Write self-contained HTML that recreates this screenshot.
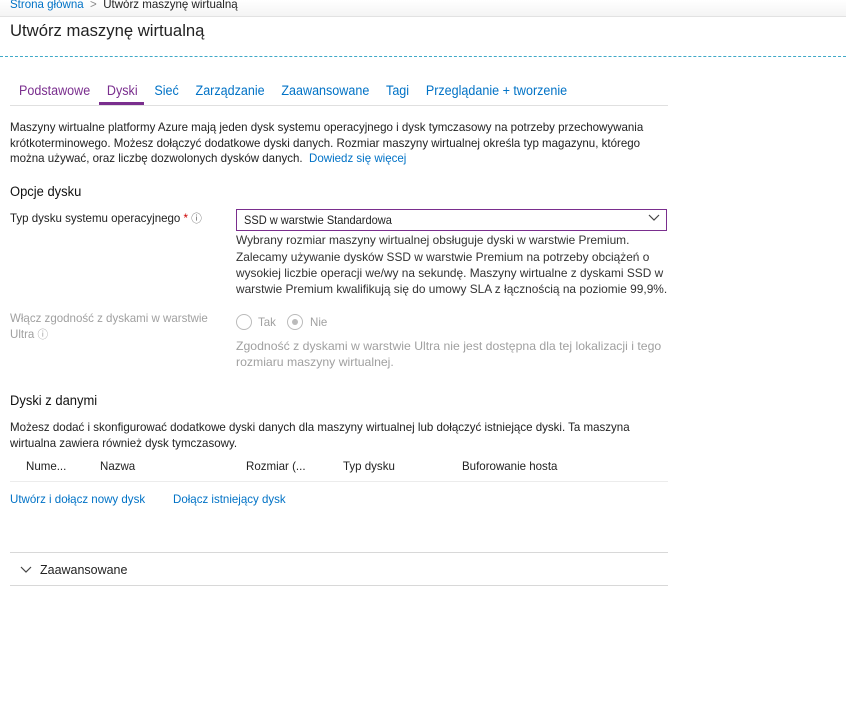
<!DOCTYPE html>
<html><head><meta charset="utf-8">
<style>
body{margin:0;width:846px;height:703px;background:#fff;position:relative;overflow:hidden;font-family:"Liberation Sans",sans-serif;color:#222;}
.t{position:absolute;white-space:nowrap;transform-origin:0 0;transform:scaleX(.96);font-size:12px;line-height:16px;}
.b{color:#0072c6}
.g{color:#a0a0a0}
.hl{position:absolute;height:1px;background:#e0e0e0}
</style></head><body>
<div style="position:absolute;left:0;top:0;width:846px;height:16px;background:linear-gradient(#fff,#f4f4f4);border-bottom:1px solid #e2e2e2"></div>
<div class="t" style="left:10px;top:-4px"><span class="b">Strona główna</span> <span style="color:#888">&nbsp;&gt;&nbsp;</span> Utwórz maszynę wirtualną</div>
<div class="t" style="left:10px;top:20px;font-size:17px;line-height:22px;transform:scaleX(.98)">Utwórz maszynę wirtualną</div>
<div style="position:absolute;left:0;top:56px;width:846px;border-top:1px dashed #40a9c8"></div>
<div class="t" style="left:19px;top:83px;font-size:13.5px;transform:scaleX(.93)"><span style="color:#7a2e8e">Podstawowe</span><span style="display:inline-block;width:18px"></span><span style="color:#7a2e8e">Dyski</span><span style="display:inline-block;width:18px"></span><span class="b">Sieć</span><span style="display:inline-block;width:18px"></span><span class="b">Zarządzanie</span><span style="display:inline-block;width:18px"></span><span class="b">Zaawansowane</span><span style="display:inline-block;width:18px"></span><span class="b">Tagi</span><span style="display:inline-block;width:18px"></span><span class="b">Przeglądanie + tworzenie</span></div>
<div class="hl" style="left:10px;top:105px;width:658px"></div>
<div style="position:absolute;left:99px;top:102px;width:45px;height:3px;background:#7a2e8e"></div>
<div class="t" style="left:10px;top:119px">Maszyny wirtualne platformy Azure mają jeden dysk systemu operacyjnego i dysk tymczasowy na potrzeby przechowywania</div>
<div class="t" style="left:10px;top:135px">krótkoterminowego. Możesz dołączyć dodatkowe dyski danych. Rozmiar maszyny wirtualnej określa typ magazynu, którego</div>
<div class="t" style="left:10px;top:150px">można używać, oraz liczbę dozwolonych dysków danych.&nbsp; <span class="b">Dowiedz się więcej</span></div>
<div class="t" style="left:10px;top:184px;font-size:13.5px;color:#111">Opcje dysku</div>
<div class="t" style="left:10px;top:210px">Typ dysku systemu operacyjnego <span style="color:#c00">*</span> <span style="font-size:11px;color:#666">ⓘ</span></div>
<div style="position:absolute;left:236px;top:209px;width:429px;height:20px;border:1px solid #7a2e8e"></div>
<div class="t" style="left:244px;top:212px;transform:scaleX(.92)">SSD w warstwie Standardowa</div>
<svg style="position:absolute;left:648px;top:214px" width="12" height="8"><path d="M1 1 L6 6 L11 1" stroke="#444" fill="none" stroke-width="1.2"/></svg>
<div class="t" style="left:236px;top:232px;color:#333;transform:scaleX(.99)">Wybrany rozmiar maszyny wirtualnej obsługuje dyski w warstwie Premium.</div>
<div class="t" style="left:236px;top:249px;color:#333;transform:scaleX(.99)">Zalecamy używanie dysków SSD w warstwie Premium na potrzeby obciążeń o</div>
<div class="t" style="left:236px;top:265px;color:#333;transform:scaleX(.99)">wysokiej liczbie operacji we/wy na sekundę. Maszyny wirtualne z dyskami SSD w</div>
<div class="t" style="left:236px;top:281px;color:#333;transform:scaleX(.99)">warstwie Premium kwalifikują się do umowy SLA z łącznością na poziomie 99,9%.</div>
<div class="t g" style="left:10px;top:310px">Włącz zgodność z dyskami w warstwie</div>
<div class="t g" style="left:10px;top:326px">Ultra <span style="font-size:11px">ⓘ</span></div>
<div style="position:absolute;left:236px;top:314px;width:14px;height:14px;border:1px solid #bbb;border-radius:50%"></div>
<div class="t g" style="left:258px;top:314px">Tak</div>
<div style="position:absolute;left:287px;top:314px;width:14px;height:14px;border:1px solid #bbb;border-radius:50%"></div>
<div style="position:absolute;left:292px;top:319px;width:6px;height:6px;background:#bbb;border-radius:50%"></div>
<div class="t g" style="left:310px;top:314px">Nie</div>
<div class="t g" style="left:236px;top:338px;transform:scaleX(1.02)">Zgodność z dyskami w warstwie Ultra nie jest dostępna dla tej lokalizacji i tego</div>
<div class="t g" style="left:236px;top:354px;transform:scaleX(1.02)">rozmiaru maszyny wirtualnej.</div>
<div class="t" style="left:10px;top:393px;font-size:13.5px;color:#111">Dyski z danymi</div>
<div class="t" style="left:10px;top:419px">Możesz dodać i skonfigurować dodatkowe dyski danych dla maszyny wirtualnej lub dołączyć istniejące dyski. Ta maszyna</div>
<div class="t" style="left:10px;top:435px">wirtualna zawiera również dysk tymczasowy.</div>
<div class="t" style="left:26px;top:458px">Nume...</div>
<div class="t" style="left:100px;top:458px">Nazwa</div>
<div class="t" style="left:246px;top:458px">Rozmiar (...</div>
<div class="t" style="left:343px;top:458px">Typ dysku</div>
<div class="t" style="left:462px;top:458px">Buforowanie hosta</div>
<div class="hl" style="left:10px;top:481px;width:658px;background:#ececec"></div>
<div class="t b" style="left:10px;top:491px">Utwórz i dołącz nowy dysk</div>
<div class="t b" style="left:173px;top:491px">Dołącz istniejący dysk</div>
<div class="hl" style="left:10px;top:552px;width:658px;background:#d8d8d8"></div>
<svg style="position:absolute;left:20px;top:566px" width="12" height="8"><path d="M1 1 L6 6 L11 1" stroke="#444" fill="none" stroke-width="1.2"/></svg>
<div class="t" style="left:40px;top:562px;font-size:13px">Zaawansowane</div>
<div class="hl" style="left:10px;top:585px;width:658px;background:#d8d8d8"></div>
</body></html>
